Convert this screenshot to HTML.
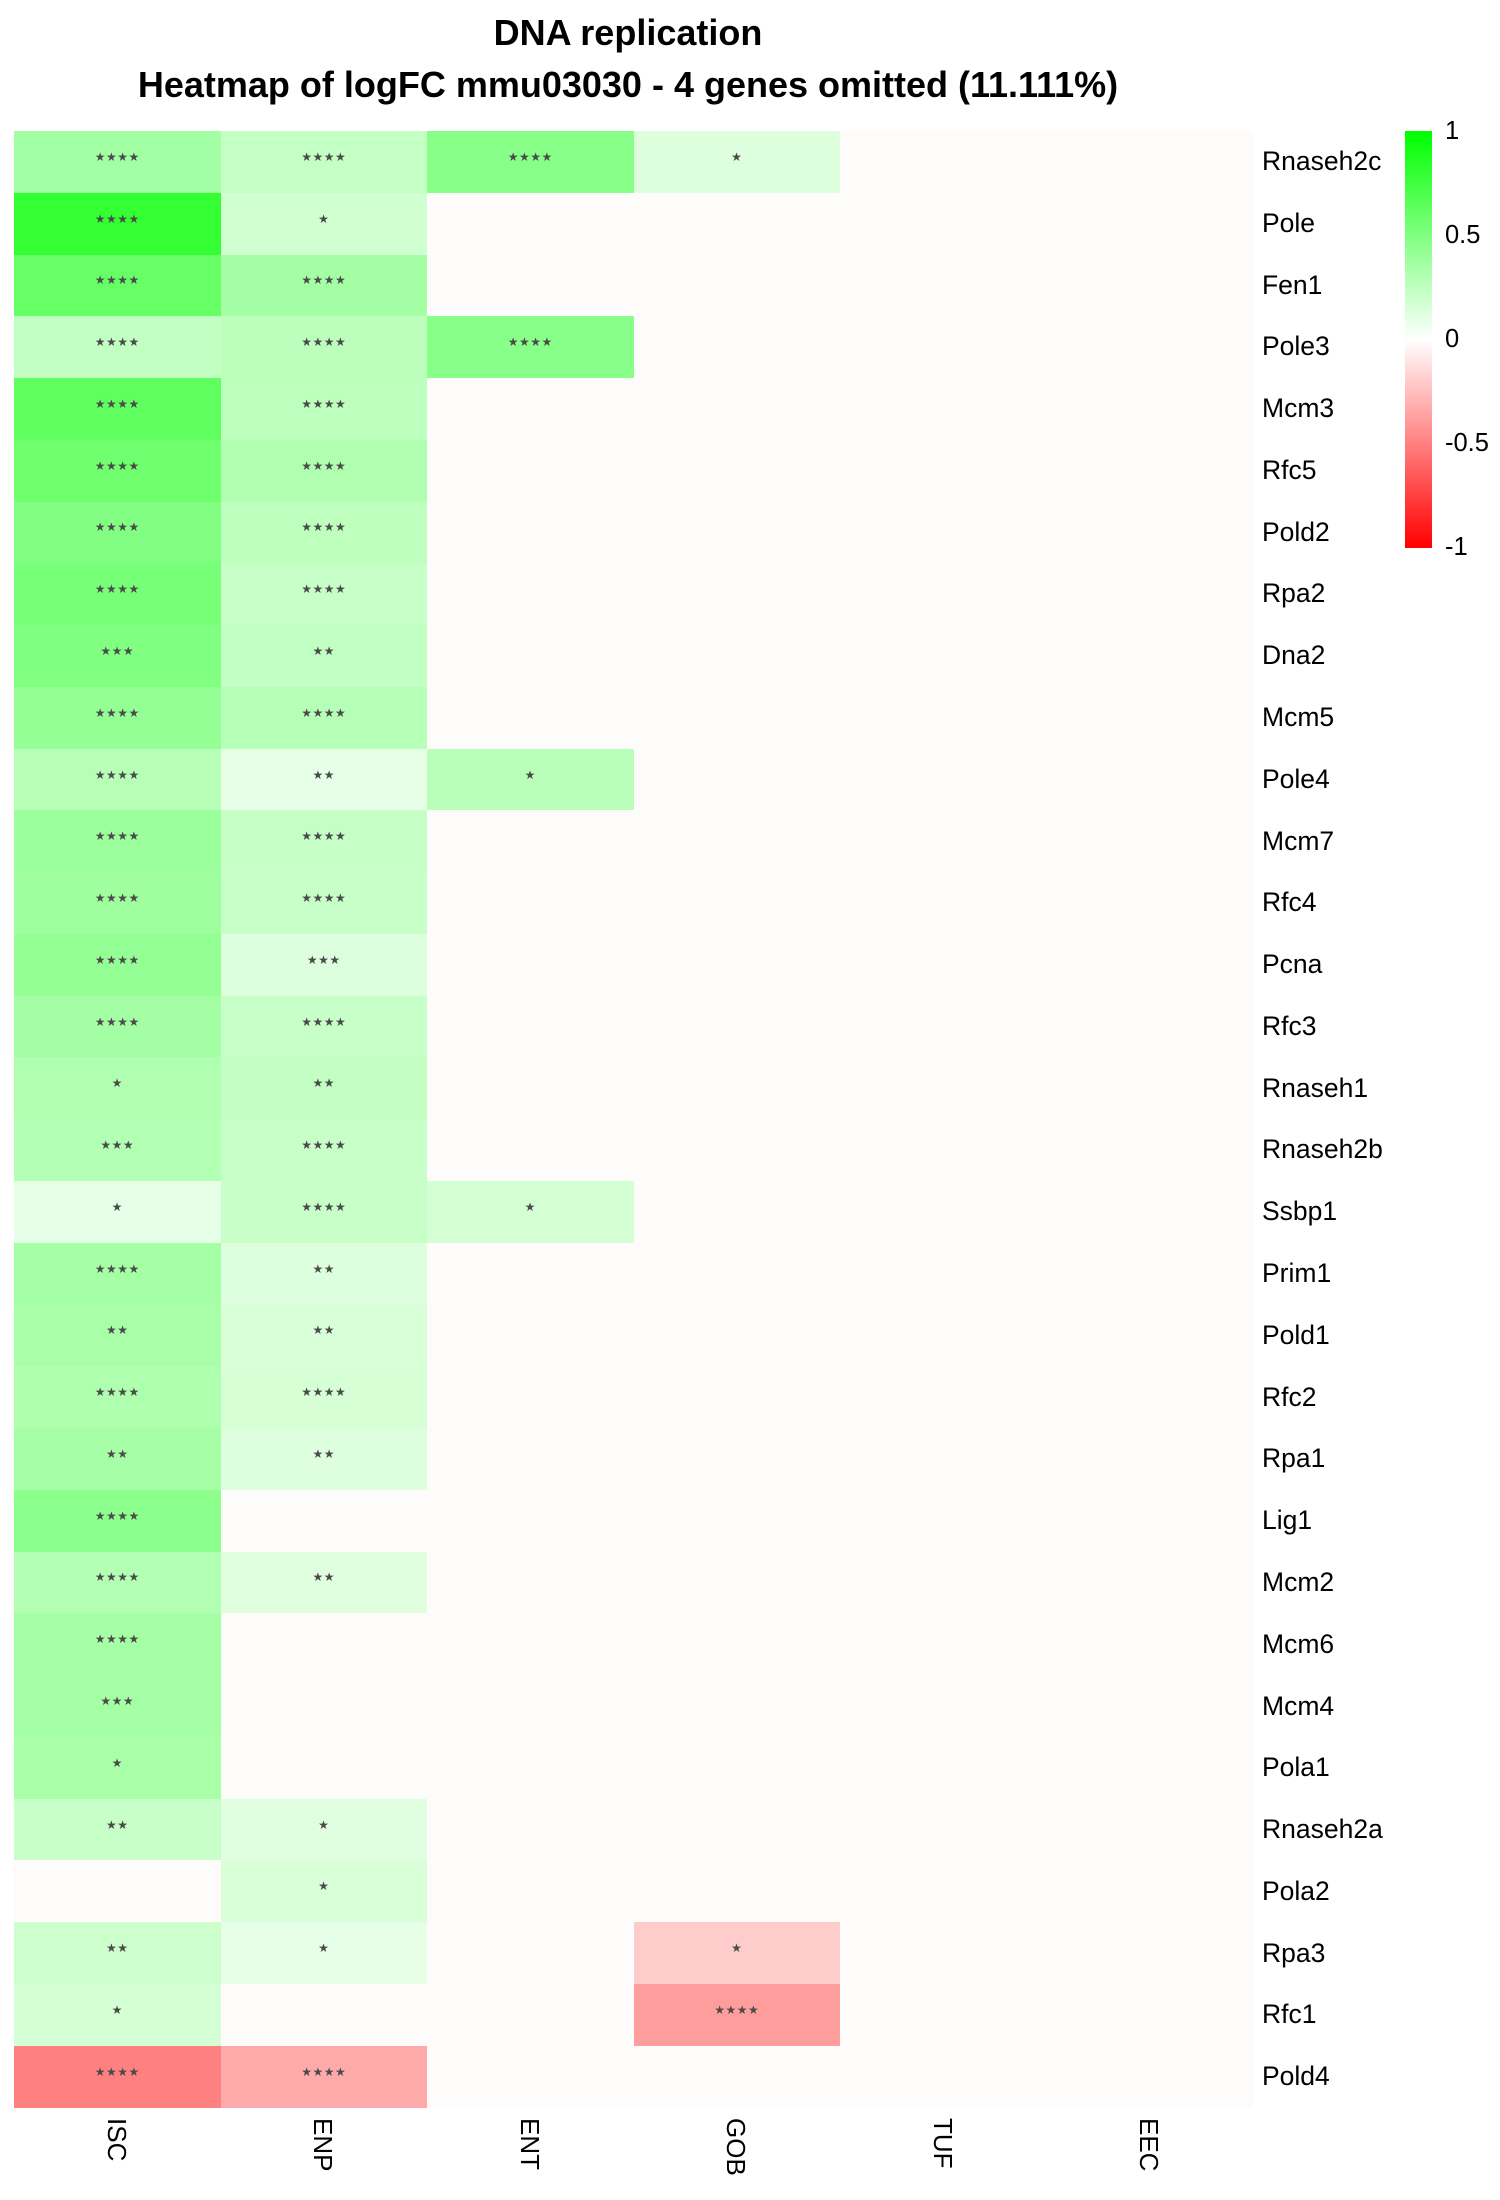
<!DOCTYPE html>
<html><head><meta charset="utf-8"><style>
body{margin:0;width:1500px;height:2200px;background:#fff;font-family:"Liberation Sans",Arial,sans-serif;position:relative;overflow:hidden}
.t{position:absolute;left:0;width:1256px;text-align:center;font-weight:bold;color:#000}
#hm{position:absolute;left:14px;top:131px;width:1239px;height:1977px;background:#fdfcfa;display:grid;grid-template-columns:repeat(6,206.5px);grid-template-rows:repeat(32,61.78px)}
#hm div{display:flex;align-items:center;justify-content:center;font-family:"DejaVu Sans",sans-serif;font-size:12px;color:#4a4a4a;letter-spacing:0.5px;padding-bottom:10px;box-sizing:border-box}
.rl{position:absolute;left:1262px;font-size:26.5px;color:#000;height:61.78px;line-height:61.78px}
.cl{position:absolute;top:2118px;writing-mode:vertical-rl;font-size:26px;width:30px;margin-left:-15px;color:#000;line-height:30px}
.lg{position:absolute;left:1445px;font-size:25.5px;line-height:25px;color:#000}
</style></head><body>
<div class="t" style="top:12px;font-size:36px;line-height:42px">DNA replication</div>
<div class="t" style="top:64px;font-size:36px;line-height:42px">Heatmap of logFC mmu03030 - 4 genes omitted (11.111%)</div>
<div id="hm">
<div style="background:#a3ffa3">★★★★</div><div style="background:#c4ffc4">★★★★</div><div style="background:#88ff88">★★★★</div><div style="background:#ddffdd">★</div><div></div><div></div>
<div style="background:#33ff33">★★★★</div><div style="background:#d0ffd0">★</div><div></div><div></div><div></div><div></div>
<div style="background:#66ff66">★★★★</div><div style="background:#a4ffa4">★★★★</div><div></div><div></div><div></div><div></div>
<div style="background:#c2ffc2">★★★★</div><div style="background:#bcffbc">★★★★</div><div style="background:#88ff88">★★★★</div><div></div><div></div><div></div>
<div style="background:#5fff5f">★★★★</div><div style="background:#bdffbd">★★★★</div><div></div><div></div><div></div><div></div>
<div style="background:#6fff6f">★★★★</div><div style="background:#b0ffb0">★★★★</div><div></div><div></div><div></div><div></div>
<div style="background:#82ff82">★★★★</div><div style="background:#beffbe">★★★★</div><div></div><div></div><div></div><div></div>
<div style="background:#78ff78">★★★★</div><div style="background:#c8ffc8">★★★★</div><div></div><div></div><div></div><div></div>
<div style="background:#80ff80">★★★</div><div style="background:#c2ffc2">★★</div><div></div><div></div><div></div><div></div>
<div style="background:#94ff94">★★★★</div><div style="background:#b6ffb6">★★★★</div><div></div><div></div><div></div><div></div>
<div style="background:#b7ffb7">★★★★</div><div style="background:#e6ffe6">★★</div><div style="background:#b9ffb9">★</div><div></div><div></div><div></div>
<div style="background:#9bff9b">★★★★</div><div style="background:#c6ffc6">★★★★</div><div></div><div></div><div></div><div></div>
<div style="background:#9fff9f">★★★★</div><div style="background:#c8ffc8">★★★★</div><div></div><div></div><div></div><div></div>
<div style="background:#94ff94">★★★★</div><div style="background:#ddffdd">★★★</div><div></div><div></div><div></div><div></div>
<div style="background:#a4ffa4">★★★★</div><div style="background:#c8ffc8">★★★★</div><div></div><div></div><div></div><div></div>
<div style="background:#b0ffb0">★</div><div style="background:#c3ffc3">★★</div><div></div><div></div><div></div><div></div>
<div style="background:#b3ffb3">★★★</div><div style="background:#c8ffc8">★★★★</div><div></div><div></div><div></div><div></div>
<div style="background:#e6ffe6">★</div><div style="background:#c8ffc8">★★★★</div><div style="background:#d4ffd4">★</div><div></div><div></div><div></div>
<div style="background:#a5ffa5">★★★★</div><div style="background:#ddffdd">★★</div><div></div><div></div><div></div><div></div>
<div style="background:#a8ffa8">★★</div><div style="background:#d8ffd8">★★</div><div></div><div></div><div></div><div></div>
<div style="background:#aeffae">★★★★</div><div style="background:#d6ffd6">★★★★</div><div></div><div></div><div></div><div></div>
<div style="background:#a6ffa6">★★</div><div style="background:#ddffdd">★★</div><div></div><div></div><div></div><div></div>
<div style="background:#8cff8c">★★★★</div><div></div><div></div><div></div><div></div><div></div>
<div style="background:#b3ffb3">★★★★</div><div style="background:#dfffdf">★★</div><div></div><div></div><div></div><div></div>
<div style="background:#a5ffa5">★★★★</div><div></div><div></div><div></div><div></div><div></div>
<div style="background:#a5ffa5">★★★</div><div></div><div></div><div></div><div></div><div></div>
<div style="background:#a8ffa8">★</div><div></div><div></div><div></div><div></div><div></div>
<div style="background:#c8ffc8">★★</div><div style="background:#e0ffe0">★</div><div></div><div></div><div></div><div></div>
<div></div><div style="background:#d8ffd8">★</div><div></div><div></div><div></div><div></div>
<div style="background:#ccffcc">★★</div><div style="background:#e6ffe6">★</div><div></div><div style="background:#ffcccc">★</div><div></div><div></div>
<div style="background:#d4ffd4">★</div><div></div><div></div><div style="background:#ff9c9c">★★★★</div><div></div><div></div>
<div style="background:#ff8080">★★★★</div><div style="background:#ffaaaa">★★★★</div><div></div><div></div><div></div><div></div>
</div>
<div class="rl" style="top:131px">Rnaseh2c</div>
<div class="rl" style="top:192.78px">Pole</div>
<div class="rl" style="top:254.56px">Fen1</div>
<div class="rl" style="top:316.34px">Pole3</div>
<div class="rl" style="top:378.12px">Mcm3</div>
<div class="rl" style="top:439.9px">Rfc5</div>
<div class="rl" style="top:501.68px">Pold2</div>
<div class="rl" style="top:563.46px">Rpa2</div>
<div class="rl" style="top:625.24px">Dna2</div>
<div class="rl" style="top:687.02px">Mcm5</div>
<div class="rl" style="top:748.8px">Pole4</div>
<div class="rl" style="top:810.58px">Mcm7</div>
<div class="rl" style="top:872.36px">Rfc4</div>
<div class="rl" style="top:934.14px">Pcna</div>
<div class="rl" style="top:995.92px">Rfc3</div>
<div class="rl" style="top:1057.7px">Rnaseh1</div>
<div class="rl" style="top:1119.48px">Rnaseh2b</div>
<div class="rl" style="top:1181.26px">Ssbp1</div>
<div class="rl" style="top:1243.04px">Prim1</div>
<div class="rl" style="top:1304.82px">Pold1</div>
<div class="rl" style="top:1366.6px">Rfc2</div>
<div class="rl" style="top:1428.38px">Rpa1</div>
<div class="rl" style="top:1490.16px">Lig1</div>
<div class="rl" style="top:1551.94px">Mcm2</div>
<div class="rl" style="top:1613.72px">Mcm6</div>
<div class="rl" style="top:1675.5px">Mcm4</div>
<div class="rl" style="top:1737.28px">Pola1</div>
<div class="rl" style="top:1799.06px">Rnaseh2a</div>
<div class="rl" style="top:1860.84px">Pola2</div>
<div class="rl" style="top:1922.62px">Rpa3</div>
<div class="rl" style="top:1984.4px">Rfc1</div>
<div class="rl" style="top:2046.18px">Pold4</div>
<div class="cl" style="left:117px">ISC</div>
<div class="cl" style="left:323px">ENP</div>
<div class="cl" style="left:530px">ENT</div>
<div class="cl" style="left:736px">GOB</div>
<div class="cl" style="left:943px">TUF</div>
<div class="cl" style="left:1149px">EEC</div>
<div style="position:absolute;left:1405px;top:131px;width:27px;height:417px;background:linear-gradient(#00ff00,#80ff80 25%,#ffffff 50%,#ff8080 75%,#ff0000)"></div>
<div class="lg" style="top:119px">1</div>
<div class="lg" style="top:223px">0.5</div>
<div class="lg" style="top:327px">0</div>
<div class="lg" style="top:431px">-0.5</div>
<div class="lg" style="top:535px">-1</div>
</body></html>
